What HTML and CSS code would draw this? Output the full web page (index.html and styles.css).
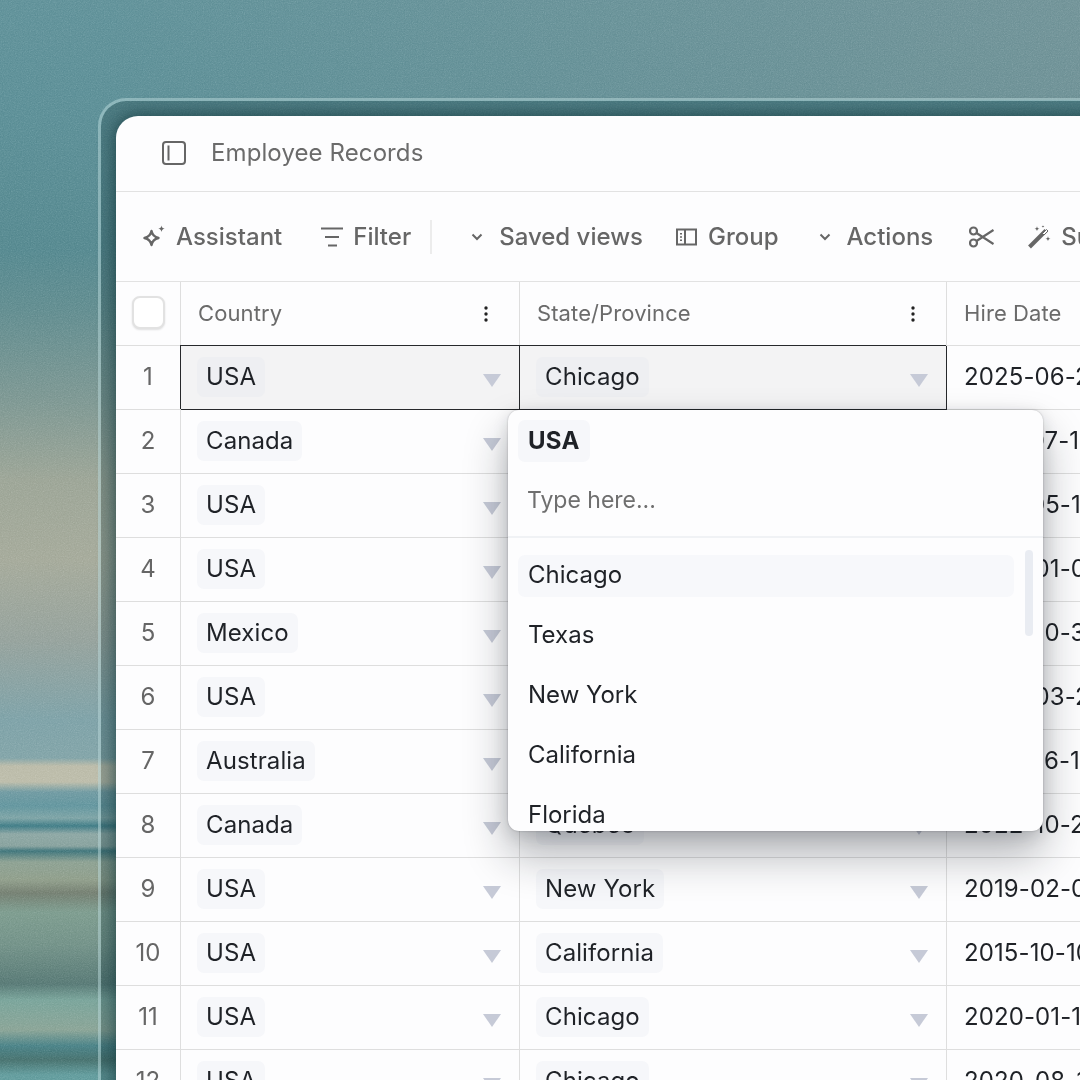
FILE: index.html
```html
<!DOCTYPE html>
<html lang="en">

<head>
  <meta charset="UTF-8" />
  <title>Employee Records</title>
  <link rel="stylesheet" href="styles.css">
</head>

<body>
  <!-- film grain over the blurred photo -->
  <svg class="grain" width="1080" height="1080">
    <filter id="noise">
      <feTurbulence type="fractalNoise" baseFrequency="0.85" numOctaves="2" stitchTiles="stitch" />
      <feColorMatrix type="saturate" values="0" />
    </filter>
    <rect width="1080" height="1080" filter="url(#noise)" />
  </svg>

  <div class="frame">
    <div class="panel">
      <div class="titlebar">
        <svg class="icon-panel" width="24" height="24" viewBox="0 0 24 24" fill="none" stroke="#666" stroke-width="2">
          <rect x="1" y="1" width="22" height="22" rx="3" />
          <path d="M6.500 4.500v15" />
        </svg>
        <span>Employee Records</span>
      </div>

      <div class="toolbar">
        <div class="tool tool-first">
          <svg width="24" height="24" viewBox="0 0 24 24" fill="#666">
            <path d="M9.500 6c.9 4.300 2.700 6 7 7-4.300 1-6.100 2.700-7 7-.9-4.300-2.700-6-7-7 4.300-1 6.100-2.700 7-7z" fill="none" stroke="#666" stroke-width="2.400" stroke-linejoin="round" />
            <path d="M19.500 0.500c.3 2 1.200 2.900 3.200 3.200-2 .3-2.900 1.200-3.200 3.200-.3-2-1.200-2.900-3.200-3.200 2-.3 2.900-1.200 3.200-3.200z" />
          </svg>
          <span>Assistant</span>
        </div>
        <div class="tool tool-filter">
          <svg width="22" height="20" viewBox="0 0 22 20" fill="none" stroke="#666" stroke-width="2.200">
            <path d="M0 1.500h22M4 10h14M7 18.500h9" />
          </svg>
          <span>Filter</span>
        </div>
        <div class="tool-sep"></div>
        <div class="tool tool-saved">
          <svg class="chevron" width="14" height="14" viewBox="0 0 14 14" fill="none" stroke="#666" stroke-width="2">
            <path d="M2.500 4.500l4.500 4.500 4.500-4.500" />
          </svg>
          <span>Saved views</span>
        </div>
        <div class="tool tool-group">
          <svg width="21" height="18" viewBox="0 0 21 18" fill="none" stroke="#666" stroke-width="2">
            <rect x="1" y="1.500" width="19" height="15" />
            <path d="M9 1.500v15" />
            <path d="M5 5v1.500M5 8.300v1.500M5 11.500v1.500" />
          </svg>
          <span>Group</span>
        </div>
        <div class="tool tool-actions">
          <svg class="chevron" width="14" height="14" viewBox="0 0 14 14" fill="none" stroke="#666" stroke-width="2">
            <path d="M2.500 4.500l4.500 4.500 4.500-4.500" />
          </svg>
          <span>Actions</span>
        </div>
        <div class="tool tool-cut">
          <svg width="25" height="24" viewBox="0 0 25 24" fill="none" stroke="#666" stroke-width="2.200">
            <circle cx="4.500" cy="6" r="3.500" />
            <circle cx="4.500" cy="18" r="3.500" />
            <path d="M7.500 8l17 11M7.500 16l17-11" />
          </svg>
        </div>
        <div class="tool tool-wand">
          <svg width="24" height="24" viewBox="0 0 24 24" fill="#666">
            <path d="M1.500 22L18 5.500" fill="none" stroke="#666" stroke-width="4" />
            <path d="M14.500 8.500L18.500 4.500 20 6 16 10z" fill="#fdfdfd" stroke="#666" stroke-width="1" />
            <path d="M9 1c.2 1.800.9 2.500 2.500 2.800C9.900 4 9.200 4.800 9 6.500 8.800 4.800 8 4 6.500 3.800 8 3.500 8.800 2.800 9 1zM20 11c.2 1.800.9 2.500 2.500 2.800-1.600.2-2.300 1-2.500 2.700-.2-1.700-1-2.500-2.500-2.700 1.500-.3 2.300-1 2.500-2.800zM15 0c.1 1 .5 1.400 1.400 1.500-.9.1-1.300.5-1.400 1.500-.1-1-.5-1.400-1.400-1.500.9-.1 1.300-.5 1.400-1.500z" />
          </svg>
          <span>Suggest</span>
        </div>
      </div>

      <div class="sheet">
        <div class="row row-head">
          <div class="cell cell-num"><span class="checkbox"></span></div>
          <div class="cell cell-head">
            <span>Country</span>
            <svg class="dots" width="6" height="16" viewBox="0 0 6 16" fill="#222"><circle cx="3" cy="2" r="1.700" /><circle cx="3" cy="8" r="1.700" /><circle cx="3" cy="14" r="1.700" /></svg>
          </div>
          <div class="cell cell-head">
            <span>State/Province</span>
            <svg class="dots" width="6" height="16" viewBox="0 0 6 16" fill="#222"><circle cx="3" cy="2" r="1.700" /><circle cx="3" cy="8" r="1.700" /><circle cx="3" cy="14" r="1.700" /></svg>
          </div>
          <div class="cell cell-head cell-date">Hire Date</div>
        </div>

        <div class="row">
          <div class="cell cell-num">1</div>
          <div class="cell cell-pick selected"><span class="chip">USA</span><i class="caret"></i></div>
          <div class="cell cell-pick selected"><span class="chip">Chicago</span><i class="caret"></i></div>
          <div class="cell cell-date">2025-06-21</div>
        </div>
        <div class="row">
          <div class="cell cell-num">2</div>
          <div class="cell cell-pick"><span class="chip">Canada</span><i class="caret"></i></div>
          <div class="cell cell-pick"></div>
          <div class="cell cell-date">2021-07-14</div>
        </div>
        <div class="row">
          <div class="cell cell-num">3</div>
          <div class="cell cell-pick"><span class="chip">USA</span><i class="caret"></i></div>
          <div class="cell cell-pick"></div>
          <div class="cell cell-date">2018-05-12</div>
        </div>
        <div class="row">
          <div class="cell cell-num">4</div>
          <div class="cell cell-pick"><span class="chip">USA</span><i class="caret"></i></div>
          <div class="cell cell-pick"></div>
          <div class="cell cell-date">2022-01-05</div>
        </div>
        <div class="row">
          <div class="cell cell-num">5</div>
          <div class="cell cell-pick"><span class="chip">Mexico</span><i class="caret"></i></div>
          <div class="cell cell-pick"></div>
          <div class="cell cell-date">2022-10-30</div>
        </div>
        <div class="row">
          <div class="cell cell-num">6</div>
          <div class="cell cell-pick"><span class="chip">USA</span><i class="caret"></i></div>
          <div class="cell cell-pick"></div>
          <div class="cell cell-date">2022-03-22</div>
        </div>
        <div class="row">
          <div class="cell cell-num">7</div>
          <div class="cell cell-pick"><span class="chip">Australia</span><i class="caret"></i></div>
          <div class="cell cell-pick"></div>
          <div class="cell cell-date">2017-06-18</div>
        </div>
        <div class="row">
          <div class="cell cell-num">8</div>
          <div class="cell cell-pick"><span class="chip">Canada</span><i class="caret"></i></div>
          <div class="cell cell-pick"><span class="chip">Quebec</span><i class="caret"></i></div>
          <div class="cell cell-date">2022-10-25</div>
        </div>
        <div class="row">
          <div class="cell cell-num">9</div>
          <div class="cell cell-pick"><span class="chip">USA</span><i class="caret"></i></div>
          <div class="cell cell-pick"><span class="chip">New York</span><i class="caret"></i></div>
          <div class="cell cell-date">2019-02-08</div>
        </div>
        <div class="row">
          <div class="cell cell-num">10</div>
          <div class="cell cell-pick"><span class="chip">USA</span><i class="caret"></i></div>
          <div class="cell cell-pick"><span class="chip">California</span><i class="caret"></i></div>
          <div class="cell cell-date">2015-10-10</div>
        </div>
        <div class="row">
          <div class="cell cell-num">11</div>
          <div class="cell cell-pick"><span class="chip">USA</span><i class="caret"></i></div>
          <div class="cell cell-pick"><span class="chip">Chicago</span><i class="caret"></i></div>
          <div class="cell cell-date">2020-01-17</div>
        </div>
        <div class="row">
          <div class="cell cell-num">12</div>
          <div class="cell cell-pick"><span class="chip">USA</span><i class="caret"></i></div>
          <div class="cell cell-pick"><span class="chip">Chicago</span><i class="caret"></i></div>
          <div class="cell cell-date">2020-08-12</div>
        </div>

        <!-- dropdown open on the selected State cell -->
        <div class="dropdown">
          <div class="dropdown-top">
            <span class="chip chip-bold">USA</span>
            <div class="dropdown-input">Type here...</div>
          </div>
          <div class="dropdown-list">
            <div class="option option-active">Chicago</div>
            <div class="option">Texas</div>
            <div class="option">New York</div>
            <div class="option">California</div>
            <div class="option">Florida</div>
            <span class="scrollbar"></span>
          </div>
        </div>
      </div>
    </div>
  </div>
</body>

</html>
```
FILE: styles.css
```css
* {
  margin: 0;
  padding: 0;
  box-sizing: border-box;
}

html,
body {
  width: 1080px;
  height: 1080px;
  overflow: hidden;
}

body {
  position: relative;
  padding: 98px 0 0 98px;
  font-family: "Inter", "Liberation Sans", sans-serif;
  color: #1f2227;
  background:
    linear-gradient(90deg, rgba(125, 140, 140, 0) 10%, rgba(135, 145, 145, 0.38) 100%) top / 100% 100px no-repeat,
    linear-gradient(180deg,
      #5b8d95 0,
      #568a92 120px,
      #50848b 250px,
      #5c888b 310px,
      #78938e 400px,
      #98a192 480px,
      #a1a696 560px,
      #919e98 640px,
      #799ea4 720px,
      #7da0a4 758px,
      #b8b8a5 766px,
      #b9b9a6 782px,
      #6b969e 792px,
      #5d919a 806px,
      #79a0a2 818px,
      #3a7781 826px,
      #88a3a0 834px,
      #839e9a 846px,
      #3a7076 851px,
      #889d8e 862px,
      #8b9a86 880px,
      #6f7a6c 893px,
      #78988a 912px,
      #6d8d83 945px,
      #527470 984px,
      #74a096 1000px,
      #85a092 1030px,
      #447d82 1046px,
      #426d6a 1060px,
      #5d9899 1075px);
}

.grain {
  position: absolute;
  top: 0;
  left: 0;
  mix-blend-mode: soft-light;
  opacity: 0.7;
}

.frame {
  position: relative;
  width: 1100px;
  height: 1100px;
  padding: 15px;
  border: 3px solid rgba(190, 222, 224, 0.5);
  border-radius: 28px;
  background: rgba(22, 58, 62, 0.26);
  background-clip: padding-box;
}

.panel {
  height: 100%;
  overflow: hidden;
  border-radius: 22px;
  background: #fdfdfe;
  box-shadow: 0 0 16px 2px rgba(15, 50, 55, 0.65);
}

.titlebar {
  display: flex;
  align-items: center;
  gap: 25px;
  height: 76px;
  padding: 0 0 2px 46px;
  border-bottom: 1px solid #e2e2e2;
  font-size: 24px;
  letter-spacing: 0.1px;
  color: #6b6b6b;
}

.toolbar {
  display: flex;
  align-items: center;
  height: 90px;
  padding-left: 26px;
  border-bottom: 1px solid #e2e2e2;
  font-size: 24px;
  font-weight: 500;
  color: #666;
  white-space: nowrap;
}

.tool {
  display: flex;
  align-items: center;
  gap: 10px;
  flex: none;
}

.tool-filter {
  margin-left: 39px;
}

.tool-sep {
  flex: none;
  width: 2px;
  height: 34px;
  margin-left: 19px;
  background: #ececec;
}

.tool-saved {
  margin-left: 38px;
  gap: 15px;
}

.tool-group {
  margin-left: 33px;
  gap: 11px;
}

.tool-actions {
  margin-left: 39px;
  gap: 15px;
}

.tool-cut {
  margin-left: 36px;
}

.tool-wand {
  margin-left: 34px;
  gap: 9px;
}

.sheet {
  position: relative;
}

.row {
  display: grid;
  grid-template-columns: 65px 339px 427px 300px;
  height: 64px;
}

.cell {
  display: flex;
  align-items: center;
  min-width: 0;
  padding-bottom: 2px;
  border-right: 1px solid #dedede;
  border-bottom: 1px solid #dedede;
  font-size: 24px;
  letter-spacing: 0.1px;
  white-space: nowrap;
}

.cell-num {
  justify-content: center;
  color: #666;
}

.checkbox {
  width: 33px;
  height: 33px;
  border: 2px solid #e2e2e2;
  border-radius: 8px;
  background: #fff;
  box-shadow: 0 1px 2px rgba(0, 0, 0, 0.12);
}

.cell-head {
  justify-content: space-between;
  padding: 0 30px 2px 17px;
  font-size: 22px;
  color: #6b6b6b;
}

.dots {
  flex: none;
  margin-top: 2px;
}

.cell-pick {
  justify-content: space-between;
  padding: 0 18px 2px 16px;
}

.cell-date {
  padding-left: 17px;
  border-right: none;
}

.selected {
  border-color: #26282b;
  box-shadow: -1px -1px 0 #26282b;
  background: #f3f3f4;
}

.selected .chip {
  background: #eeeff2;
}

.chip {
  display: inline-flex;
  align-items: center;
  height: 40px;
  padding: 0 9px;
  border-radius: 7px;
  background: #f6f7fa;
}

.caret {
  flex: none;
  width: 0;
  height: 0;
  margin-top: 7px;
  border-top: 13px solid #c6cad7;
  border-left: 9px solid transparent;
  border-right: 9px solid transparent;
}

.dropdown {
  position: absolute;
  top: 128px;
  left: 392px;
  width: 535px;
  height: 421px;
  overflow: hidden;
  border-radius: 11px;
  background: #fdfdfe;
  box-shadow:
    0 0 2px rgba(0, 0, 0, 0.25),
    0 24px 44px rgba(20, 25, 35, 0.32),
    0 4px 16px rgba(20, 25, 35, 0.14);
  font-size: 24px;
}

.dropdown-top {
  height: 128px;
  padding: 10px 10px 0;
  border-bottom: 2px solid #f0f2f5;
}

.chip-bold {
  padding: 0 10px 2px;
  height: 42px;
  font-weight: 700;
  letter-spacing: 0.3px;
}

.dropdown-input {
  margin-top: 24px;
  padding-left: 9px;
  font-size: 23px;
  color: #6f6f6f;
}

.dropdown-list {
  position: relative;
  padding: 17px 29px 0 10px;
}

.option {
  display: flex;
  align-items: center;
  height: 42px;
  margin-bottom: 18px;
  padding: 0 0 3px 10px;
  border-radius: 7px;
}

.option-active {
  background: #f7f8fb;
}

.scrollbar {
  position: absolute;
  top: 12px;
  right: 10px;
  width: 8px;
  height: 86px;
  border-radius: 4px;
  background: #e9ecf2;
}
```
